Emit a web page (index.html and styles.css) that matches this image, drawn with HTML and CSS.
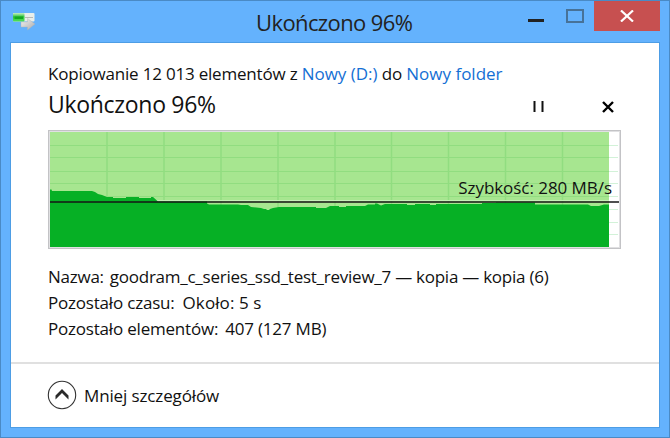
FILE: index.html
```html
<!DOCTYPE html>
<html lang="pl">
<head>
    <meta charset="UTF-8">
    <meta name="viewport" content="width=device-width, initial-scale=1.0">
    <title>Ukończono 96%</title>
    <link rel="stylesheet" href="styles.css">
</head>
<body>
    <div class="window">
        <div class="title-bar">
            <svg class="app-icon" width="24" height="20" viewBox="0 0 24 20">
                <defs>
                    <linearGradient id="arrowFill" x1="0" y1="0" x2="1" y2="1">
                        <stop offset="0" stop-color="#f4f4f4"/>
                        <stop offset="1" stop-color="#aaa"/>
                    </linearGradient>
                    <linearGradient id="barFill" x1="0" y1="0" x2="0" y2="1">
                        <stop offset="0" stop-color="#c5edc5"/>
                        <stop offset="0.45" stop-color="#2fc53b"/>
                        <stop offset="1" stop-color="#4fe05a"/>
                    </linearGradient>
                </defs>
                <rect x="1" y="1" width="21.5" height="8.5" rx="1" fill="#e8eeea"/>
                <rect x="1" y="1" width="11.5" height="8.5" rx="1" fill="url(#barFill)"/>
                <path d="M13 5.5h8" stroke="#aaa" stroke-width="0.8"/>
                <rect x="2.5" y="4.5" width="8.5" height="2.5" fill="#14a824"/>
                <path d="M9 10h6.5V6.5L23 12l-7.500 6v-3H9z" fill="url(#arrowFill)" stroke="#b0b0b0" stroke-width="0.4"/>
            </svg>
            <div class="title">Ukończono 96%</div>
            <div class="window-buttons">
                <span class="minimize"></span>
                <span class="maximize"></span>
                <span class="close">
                    <svg width="14" height="12" viewBox="0 0 14 12">
                        <path d="M1 0.500L13 11.500M13 0.500L1 11.500" stroke="#fff" stroke-width="2.200"/>
                    </svg>
                </span>
            </div>
        </div>

        <div class="content">
            <div class="details">
                <p class="source">Kopiowanie 12 013 elementów z <a class="link">Nowy (D:)</a> do <a class="link">Nowy folder</a></p>
                <div class="status">
                    <h1>Ukończono 96%</h1>
                    <svg class="pause" width="11" height="11" viewBox="0 0 11 11">
                        <path d="M1.500 0v11M9.500 0v11" stroke="#111" stroke-width="2"/>
                    </svg>
                    <svg class="cancel" width="12" height="12" viewBox="0 0 12 12">
                        <path d="M1 1L11 11M11 1L1 11" stroke="#000" stroke-width="2.400"/>
                    </svg>
                </div>

                <div class="chart">
                    <svg width="573" height="119" viewBox="0 0 573 119">
                        <rect x="0.500" y="0.500" width="572" height="118" fill="#fff" stroke="#c3c3c6"/>
                        <rect x="1.500" y="1.500" width="570" height="116" fill="none" stroke="#e0e0e2"/>
                        <path class="grid-right" d="M561 15.500h9M561 27.500h9M561 41.500h9M561 53.500h9M561 66.500h9M561 79.500h9M561 92.500h9M561 104.500h9"/>
                        <rect x="2" y="2" width="559" height="115" fill="#a7e690"/>
                        <path class="grid" d="M2 15.500h559M2 27.500h559M2 41.500h559M2 53.500h559M2 66.500h559"/>
                        <path class="grid-vertical" d="M59 2v115M116 2v115M173 2v115M230 2v115M287 2v115M343.500 2v115M400.500 2v115M457.500 2v115M514.500 2v115"/>
                        <path d="M2 70.500h559" stroke="#c6f0b8"/>
                        <path d="M2 117V59.500H3.500L4 61H44L47 62L50 64L54 65L59 67H65V68H78V67H91V68H103V67H105L110 71.500H159V73.500L161 74.500H190L193 75H200L203 77L213 78L216 79H218L219 80H221L222 79L225 78L231 77H268V78H278L282 76H291V77H298V76H317L320 74.500H327V73.500H329L333 75.500L337 74H359V75H367V74H382V75H388V74H434V73H448V72.500H487V74.500H540L543 76H551L556 74.500H561V117Z" fill="#06b025"/>
                        <path d="M2 72h569" stroke="#151515" stroke-width="1.400"/>
                    </svg>
                    <span class="speed">Szybkość: 280 MB/s</span>
                </div>

                <dl class="info">
                    <div class="row name"><dt>Nazwa:</dt><dd>goodram_c_series_ssd_test_review_7 — kopia — kopia (6)</dd></div>
                    <div class="row time"><dt>Pozostało czasu:</dt><dd>Około: 5 s</dd></div>
                    <div class="row items"><dt>Pozostało elementów:</dt><dd>407 (127 MB)</dd></div>
                </dl>
            </div>

            <div class="footer">
                <svg class="arrow-up" width="30" height="30" viewBox="0 0 30 30">
                    <circle cx="15" cy="15" r="13.700" fill="#fff" stroke="#333" stroke-width="1.100"/>
                    <path d="M8.500 15.500L15 9l6.500 6.500v4L15 13l-6.500 6.500z" fill="#2a2a2a"/>
                </svg>
                <span class="toggle">Mniej szczegółów</span>
            </div>
        </div>
    </div>
</body>
</html>
```
FILE: styles.css
```css
* {
    box-sizing: border-box;
}

body {
    margin: 0;
    font-family: 'Open Sans', 'Noto Sans', sans-serif;
    font-size: 17px;
    color: #111;
}

.window {
    width: 670px;
    height: 438px;
    padding: 0 9px 9px;
    background-color: #64b2fd;
    border: 1px solid #4a8ac5;
    display: flex;
    flex-direction: column;
}

.title-bar {
    height: 41px;
    display: flex;
    align-items: flex-start;
}

.app-icon {
    margin: 11px 0 0 2px;
}

.title {
    margin: 5px 0 0 220px;
    width: 270px;
    font-size: 22px;
    line-height: 32px;
    letter-spacing: -0.6px;
    color: #222;
    white-space: nowrap;
}

.window-buttons {
    flex: 1;
    display: flex;
    justify-content: flex-end;
    align-items: flex-start;
}

.minimize {
    width: 16px;
    height: 3px;
    margin: 18px 22px 0 0;
    background-color: #222;
}

.maximize {
    width: 18px;
    height: 14px;
    margin: 8px 10px 0 0;
    border: 2px solid #477298;
}

.close {
    width: 66px;
    height: 30px;
    display: flex;
    align-items: center;
    justify-content: center;
    background-color: #c75050;
}

.content {
    flex: 1;
    background-color: #fff;
    border: 1px solid #4d9de5;
    display: flex;
    flex-direction: column;
}

.details {
    height: 321px;
    padding: 19px 37px 0;
    border-bottom: 2px solid #e0e0e0;
}

.source {
    margin: 0;
    line-height: 24px;
    letter-spacing: -0.2px;
    white-space: nowrap;
}

.link {
    color: #146fd4;
    letter-spacing: 0;
}

.status {
    height: 44px;
    display: flex;
    align-items: center;
}

h1 {
    width: 485px;
    margin: 0 0 8px;
    font-size: 23px;
    font-weight: normal;
    line-height: 32px;
    letter-spacing: -0.3px;
}

.pause {
    margin-bottom: 3px;
}

.cancel {
    margin: 0 0 2px 58px;
}

.chart {
    position: relative;
    width: 573px;
    height: 119px;
}

.chart svg {
    display: block;
}

.grid {
    stroke: #91dd80;
}

.grid-vertical {
    stroke: #91dd80;
    stroke-width: 1.5;
}

.grid-right {
    stroke: #d2f2d8;
}

.speed {
    position: absolute;
    right: 9px;
    top: 46px;
    line-height: 24px;
    letter-spacing: -0.05px;
    white-space: nowrap;
}

.info {
    margin: 15px 0 0;
}

.row {
    display: flex;
    gap: 8px;
    line-height: 26px;
    letter-spacing: -0.2px;
    white-space: nowrap;
}

.name {
    gap: 6px;
    letter-spacing: -0.25px;
}

.time dd {
    letter-spacing: 0.1px;
}

.items {
    gap: 7px;
}

dd {
    margin: 0;
}

.footer {
    flex: 1;
    padding: 0 36px;
    display: flex;
    align-items: center;
    gap: 7px;
}

.arrow-up {
    margin-bottom: 2px;
}

.toggle {
    letter-spacing: -0.13px;
}
```
